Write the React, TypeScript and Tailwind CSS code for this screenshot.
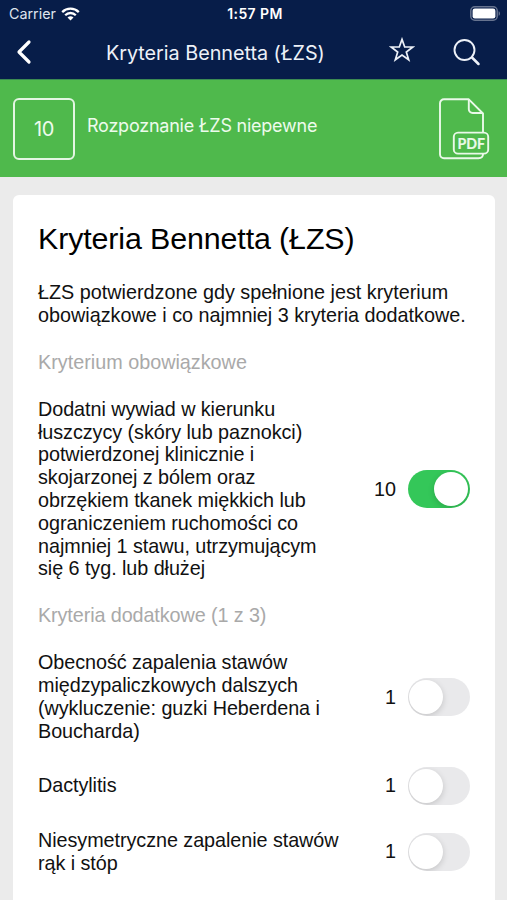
import clsx from "clsx";
import React, { useState } from "react";

interface Criterion {
  id: string;
  label: string;
  points: number;
}

const required: Criterion[] = [
  {
    id: "wywiad",
    label:
      "Dodatni wywiad w kierunku łuszczycy (skóry lub paznokci) potwierdzonej klinicznie i skojarzonej z bólem oraz obrzękiem tkanek miękkich lub ograniczeniem ruchomości co najmniej 1 stawu, utrzymującym się 6 tyg. lub dłużej",
    points: 10,
  },
];

const additional: Criterion[] = [
  {
    id: "stawy",
    label:
      "Obecność zapalenia stawów międzypaliczkowych dalszych (wykluczenie: guzki Heberdena i Boucharda)",
    points: 1,
  },
  { id: "dactylitis", label: "Dactylitis", points: 1 },
  {
    id: "niesymetryczne",
    label: "Niesymetryczne zapalenie stawów rąk i stóp",
    points: 1,
  },
];

function StatusBar() {
  return (
    <div className="grid h-[27px] grid-cols-3 items-center pl-[9px] pr-[6px]">
      <div className="flex items-center gap-[5px]">
        <span className="text-[14.3px] text-[#dfe4ee]">Carrier</span>
        <svg width="19" height="14" viewBox="0 0 19 14" fill="none" stroke="#fff" strokeWidth="2.3">
          <path d="M1.2 5.1a11.8 11.8 0 0 1 16.6 0" />
          <path d="M4.2 8.2a7.5 7.5 0 0 1 10.6 0" />
          <path d="M9.5 13.6 6.5 10.6a4.3 4.3 0 0 1 6 0z" fill="#fff" stroke="none" />
        </svg>
      </div>
      <div className="whitespace-nowrap text-center text-[14px] font-semibold tracking-[0.4px]">
        1:57 PM
      </div>
      <div className="flex justify-end">
        <svg width="31" height="15" viewBox="0 0 31 15">
          <rect x="0.8" y="0.8" width="26.4" height="13.4" rx="4" fill="none" stroke="#66738f" strokeWidth="1.5" />
          <rect x="2.6" y="2.5" width="22.8" height="10" rx="2.3" fill="#fff" />
          <path d="M28.6 5.2c1.9.6 1.9 4 0 4.6z" fill="#66738f" />
        </svg>
      </div>
    </div>
  );
}

function NavBar() {
  return (
    <div className="flex h-[52px] items-center">
      <button className="mb-[2px] ml-[15px]">
        <svg width="18" height="26" viewBox="0 0 18 26" fill="none" stroke="#fff" strokeWidth="3.2" strokeLinecap="round" strokeLinejoin="round">
          <path d="M14 3 4 13l10 10" />
        </svg>
      </button>
      <h1 className="ml-[73px] mt-[2px] w-[220px] whitespace-nowrap text-[19.8px] tracking-[-0.03px] text-[#edf1f8]">
        Kryteria Bennetta (ŁZS)
      </h1>
      <button className="mb-[6px] ml-[63px]">
        <svg width="26" height="26" viewBox="0 0 26 26" fill="none" stroke="#edf1f8" strokeWidth="1.7" strokeLinejoin="miter">
          <path d="M13 2.4 15.7 10h8.1l-6.5 5 2.4 7.8L13 18.1l-6.7 4.7L8.7 15l-6.5-5h8.1z" />
        </svg>
      </button>
      <button className="mb-[2px] ml-[37px]">
        <svg width="30" height="30" viewBox="0 0 30 30" fill="none" stroke="#edf1f8" strokeLinecap="round">
          <circle cx="12.5" cy="13" r="10" strokeWidth="1.9" />
          <path d="m20 20.5 6.5 6.5" strokeWidth="2.5" />
        </svg>
      </button>
    </div>
  );
}

function PdfIcon() {
  return (
    <svg width="52" height="62" viewBox="0 0 52 62" fill="none" stroke="#eaf9e9" strokeWidth="1.9" strokeLinejoin="round">
      <path d="M44 34.5V15.5L29.8 1.3H5a4 4 0 0 0-4 4v50.9a4 4 0 0 0 4 4h34.5c2.8 0 4.5-1.6 4.5-4.2" />
      <path d="M29.8 1.3v9.9a3.8 3.8 0 0 0 3.8 3.8H44" />
      <rect x="14.8" y="34.6" width="34.4" height="21" rx="4.2" />
      <text x="32.3" y="50.8" textAnchor="middle" fill="#eaf9e9" stroke="#eaf9e9" strokeWidth="0.2" fontFamily="Lato, sans-serif" fontSize="15.8" fontWeight="700" textLength="27.5" lengthAdjust="spacingAndGlyphs">
        PDF
      </text>
    </svg>
  );
}

function Toggle({ on, onClick }: { on: boolean; onClick: () => void }) {
  return (
    <button
      role="switch"
      aria-checked={on}
      onClick={onClick}
      className={clsx(
        "flex h-[38px] w-[62px] shrink-0 items-center overflow-hidden rounded-full transition-colors",
        on ? "justify-end bg-[#34c759] px-[2px]" : "justify-start bg-[#e9e9eb] px-px"
      )}
    >
      <span className="h-[34px] w-[34px] rounded-full bg-white shadow-[0_2px_6px_rgba(0,0,0,0.16)]" />
    </button>
  );
}

export default function App() {
  const [selected, setSelected] = useState<string[]>(["wywiad"]);

  const toggle = (id: string) =>
    setSelected((prev) =>
      prev.includes(id) ? prev.filter((item) => item !== id) : [...prev, id]
    );

  const renderRow = (item: Criterion) => (
    <div key={item.id} className="flex items-center">
      <div className="w-[308px] tracking-[-0.06px]">{item.label}</div>
      <div className="mr-[12px] flex-1 text-right">{item.points}</div>
      <Toggle on={selected.includes(item.id)} onClick={() => toggle(item.id)} />
    </div>
  );

  return (
    <div className="flex h-[900px] w-[507px] flex-col overflow-hidden bg-[#ebebeb] font-['Liberation_Sans',Arial,sans-serif]">
      <header className="h-[79px] shrink-0 bg-[#071d49] font-[Inter,sans-serif] text-white">
        <StatusBar />
        <NavBar />
      </header>

      {/* Score banner */}
      <section className="flex h-[98px] shrink-0 items-center border-t border-[#3b8b52] bg-[#4fb94c] pl-[13px] pr-[16px] font-[Inter,sans-serif] text-[#edfbec]">
        <div className="flex h-[62px] w-[62px] items-center justify-center rounded-[6px] border-2 border-[#e3f6e2] text-[20px] tracking-[-0.4px]">
          10
        </div>
        <div className="mb-[6px] ml-[12px] flex-1 whitespace-nowrap text-[18px] tracking-[-0.23px]">
          Rozpoznanie ŁZS niepewne
        </div>
        <PdfIcon />
      </section>

      <main className="mx-[13px] mt-[18px] flex w-[482px] flex-1 flex-col gap-[24.2px] rounded-t-[6px] bg-white px-[25px] pt-[25px] text-[19.8px] leading-[22.8px] text-[#111]">
        <h2 className="whitespace-nowrap text-[30.4px] leading-[36px] tracking-[-0.12px] text-black">
          Kryteria Bennetta (ŁZS)
        </h2>
        <p className="mt-[0.9px] whitespace-nowrap">
          ŁZS potwierdzone gdy spełnione jest kryterium
          <br />
          obowiązkowe i co najmniej 3 kryteria dodatkowe.
        </p>
        <h3 className="text-[#a9a9a9]">Kryterium obowiązkowe</h3>
        {required.map(renderRow)}
        <h3 className="tracking-[-0.1px] text-[#a9a9a9]">Kryteria dodatkowe (1 z 3)</h3>
        {additional.map(renderRow)}
      </main>
    </div>
  );
}
